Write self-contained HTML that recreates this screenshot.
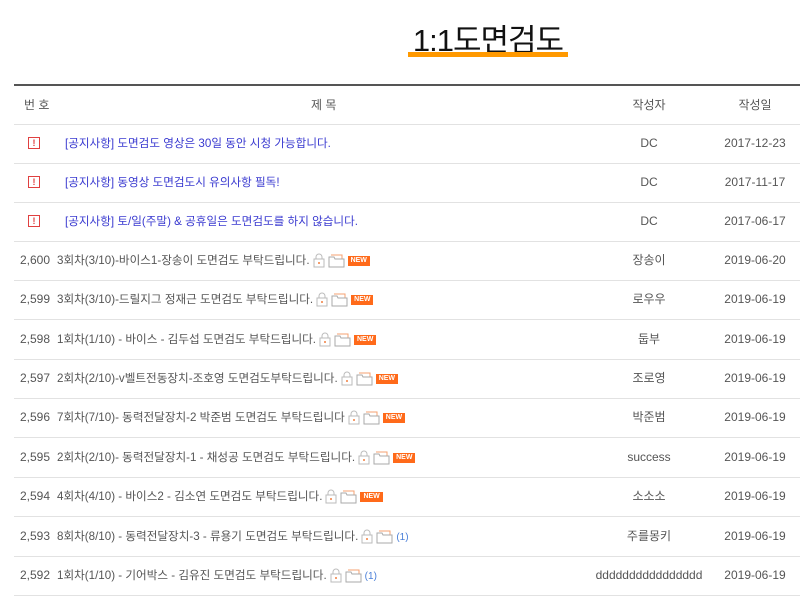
<!DOCTYPE html>
<html><head><meta charset="utf-8"><style>
body{margin:0;width:800px;height:605px;background:#fff;font-family:"Liberation Sans","Noto Sans CJK KR",sans-serif;overflow:hidden;position:relative}
.t{position:absolute;left:0;width:976px;text-align:center;top:15px;font-size:31px;color:#111;letter-spacing:-1px}
.u{position:absolute;left:408px;top:52px;width:160px;height:5px;background:#f90}
.hl{position:absolute;left:14px;right:0;top:84px;height:2px;background:#555}
.r{position:absolute;left:14px;right:0;height:39px;border-bottom:1px solid #e2e2e2;font-size:12px;color:#555;line-height:39px}
.r span{position:absolute;white-space:nowrap;top:0;line-height:39px}
.n{left:0;width:36px;text-align:right}
.c3{left:590px;width:90px;text-align:center}
.c4{left:700px;width:82px;text-align:center}
.ti{left:43px;font-size:11.6px}
.nt{left:51px;color:#3a3ad0;font-size:11.6px}
.ex{position:absolute;left:14px;top:13px;width:10px;height:10px;border:1px solid #e04040;color:#e04040;font-size:9px;line-height:10px;text-align:center;font-weight:bold}
.h{color:#555;font-size:12px}
.ic{display:inline-block;vertical-align:middle;margin-left:3px}
.new{display:inline-block;vertical-align:middle;background:#ff6a1a;color:#fff;font-size:7px;font-weight:bold;line-height:10px;padding:0 3px;margin-left:3px}
.r span.cm{position:static;color:#4a7fd8;font-size:10px;margin-left:3px;line-height:normal}
</style></head><body>
<div class="t">1:1도면검도</div><div class="u"></div>
<div class="hl"></div>
<div class="r h" style="top:86px;height:38px;line-height:38px"><span style="left:10px">번 호</span><span style="left:297px">제 목</span><span class="c3">작성자</span><span class="c4">작성일</span></div>
<div class="r" style="top:124px"><div class="ex">!</div><span class="nt">[공지사항] 도면검도 영상은 30일 동안 시청 가능합니다.</span><span class="c3">DC</span><span class="c4">2017-12-23</span></div>
<div class="r" style="top:163px"><div class="ex">!</div><span class="nt">[공지사항] 동영상 도면검도시 유의사항 필독!</span><span class="c3">DC</span><span class="c4">2017-11-17</span></div>
<div class="r" style="top:202px"><div class="ex">!</div><span class="nt">[공지사항] 토/일(주말) &amp; 공휴일은 도면검도를 하지 않습니다.</span><span class="c3">DC</span><span class="c4">2017-06-17</span></div>
<svg width="0" height="0" style="position:absolute"><defs>
<g id="lk"><rect x="1" y="6" width="10" height="8" fill="#fff" stroke="#bbb"/><path d="M3 6V4a3 3 0 0 1 6 0v2" fill="none" stroke="#bbb"/><circle cx="6" cy="10" r="1" fill="#f08040"/></g>
<g id="fd"><path d="M3 2h11v9" fill="none" stroke="#f5a070"/><path d="M1 4h5l1 2h9v8H1z" fill="#fff" stroke="#aaa"/></g>
</defs></svg>
<div class="r" style="top:241px"><span class="n">2,600</span><span class="ti">3회차(3/10)-바이스1-장송이 도면검도 부탁드립니다.<svg class="ic" width="12" height="15"><use href="#lk"/></svg><svg class="ic" width="17" height="15"><use href="#fd"/></svg><b class="new">NEW</b></span><span class="c3">장송이</span><span class="c4">2019-06-20</span></div>
<div class="r" style="top:280px"><span class="n">2,599</span><span class="ti">3회차(3/10)-드릴지그 정재근 도면검도 부탁드립니다.<svg class="ic" width="12" height="15"><use href="#lk"/></svg><svg class="ic" width="17" height="15"><use href="#fd"/></svg><b class="new">NEW</b></span><span class="c3">로우우</span><span class="c4">2019-06-19</span></div>
<div class="r" style="top:320px"><span class="n">2,598</span><span class="ti">1회차(1/10) - 바이스 - 김두섭 도면검도 부탁드립니다.<svg class="ic" width="12" height="15"><use href="#lk"/></svg><svg class="ic" width="17" height="15"><use href="#fd"/></svg><b class="new">NEW</b></span><span class="c3">둡부</span><span class="c4">2019-06-19</span></div>
<div class="r" style="top:359px"><span class="n">2,597</span><span class="ti">2회차(2/10)-v벨트전동장치-조호영 도면검도부탁드립니다.<svg class="ic" width="12" height="15"><use href="#lk"/></svg><svg class="ic" width="17" height="15"><use href="#fd"/></svg><b class="new">NEW</b></span><span class="c3">조로영</span><span class="c4">2019-06-19</span></div>
<div class="r" style="top:398px"><span class="n">2,596</span><span class="ti">7회차(7/10)- 동력전달장치-2 박준범 도면검도 부탁드립니다<svg class="ic" width="12" height="15"><use href="#lk"/></svg><svg class="ic" width="17" height="15"><use href="#fd"/></svg><b class="new">NEW</b></span><span class="c3">박준범</span><span class="c4">2019-06-19</span></div>
<div class="r" style="top:438px"><span class="n">2,595</span><span class="ti">2회차(2/10)- 동력전달장치-1 - 채성공 도면검도 부탁드립니다.<svg class="ic" width="12" height="15"><use href="#lk"/></svg><svg class="ic" width="17" height="15"><use href="#fd"/></svg><b class="new">NEW</b></span><span class="c3">success</span><span class="c4">2019-06-19</span></div>
<div class="r" style="top:477px"><span class="n">2,594</span><span class="ti">4회차(4/10) - 바이스2 - 김소연 도면검도 부탁드립니다.<svg class="ic" width="12" height="15"><use href="#lk"/></svg><svg class="ic" width="17" height="15"><use href="#fd"/></svg><b class="new">NEW</b></span><span class="c3">소소소</span><span class="c4">2019-06-19</span></div>
<div class="r" style="top:517px"><span class="n">2,593</span><span class="ti">8회차(8/10) - 동력전달장치-3 - 류용기 도면검도 부탁드립니다.<svg class="ic" width="12" height="15"><use href="#lk"/></svg><svg class="ic" width="17" height="15"><use href="#fd"/></svg><span class="cm">(1)</span></span><span class="c3">주를몽키</span><span class="c4">2019-06-19</span></div>
<div class="r" style="top:556px"><span class="n">2,592</span><span class="ti">1회차(1/10) - 기어박스 - 김유진 도면검도 부탁드립니다.<svg class="ic" width="12" height="15"><use href="#lk"/></svg><svg class="ic" width="17" height="15"><use href="#fd"/></svg><span class="cm">(1)</span></span><span class="c3" style="left:575px;width:120px">dddddddddddddddd</span><span class="c4">2019-06-19</span></div>
</body></html>
